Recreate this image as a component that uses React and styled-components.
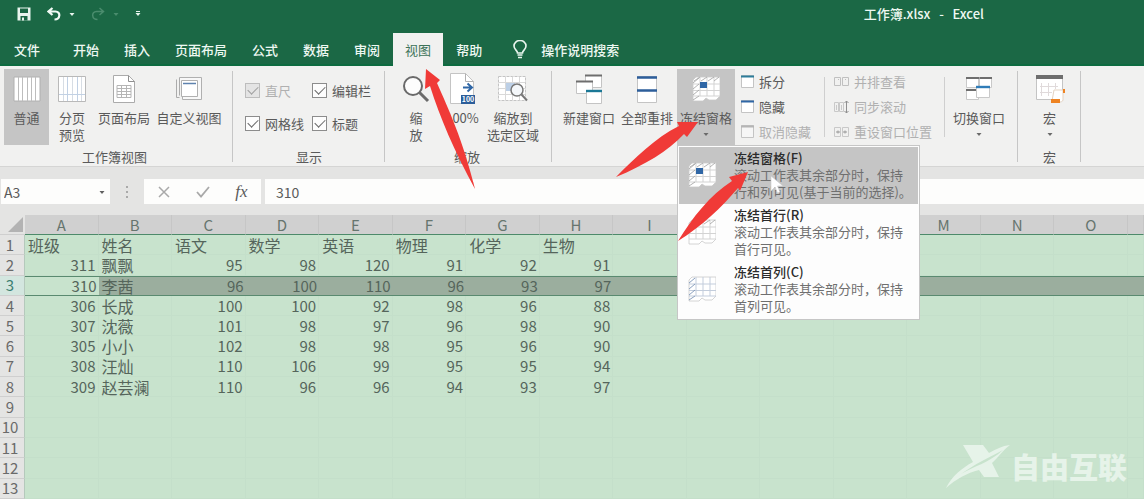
import styled, { createGlobalStyle } from 'styled-components'

const tabs = ['开始', '插入', '页面布局', '公式', '数据', '审阅', '视图', '帮助']

const columns = ['A', 'B', 'C', 'D', 'E', 'F', 'G', 'H', 'I', 'J', 'K', 'L', 'M', 'N', 'O']

const sheet = [
  ['班级', '姓名', '语文', '数学', '英语', '物理', '化学', '生物'],
  [311, '飘飘', 95, 98, 120, 91, 92, 91],
  [310, '李茜', 96, 100, 110, 96, 93, 97],
  [306, '长成', 100, 100, 92, 98, 96, 88],
  [307, '沈薇', 101, 98, 97, 96, 98, 90],
  [305, '小小', 102, 98, 98, 95, 96, 90],
  [308, '汪灿', 110, 106, 99, 95, 95, 94],
  [309, '赵芸澜', 110, 96, 96, 94, 93, 97],
  [],
  [],
  [],
  [],
  [],
]

const selectedRow = 3

const freezeOptions = [
  {
    title: '冻结窗格(F)',
    lines: ['滚动工作表其余部分时，保持', '行和列可见(基于当前的选择)。'],
    kind: 'panes',
    active: true,
  },
  {
    title: '冻结首行(R)',
    lines: ['滚动工作表其余部分时，保持', '首行可见。'],
    kind: 'row',
  },
  {
    title: '冻结首列(C)',
    lines: ['滚动工作表其余部分时，保持', '首列可见。'],
    kind: 'column',
  },
]

/* ---------- icons ---------- */

const SaveIcon = () => (
  <svg width="14" height="14" viewBox="0 0 14 14">
    <path d="M0.5 0.5h13v13h-13z" fill="#e9f5ee" />
    <path d="M3 1.5h8v4.5h-8zM3.5 9h7v4.5h-7z" fill="#1b6845" />
    <path d="M5 10.5h2v3h-2z" fill="#e9f5ee" />
  </svg>
)

const UndoIcon = ({ flip }) => (
  <svg width="14" height="14" viewBox="0 0 14 14">
    <g transform={flip ? 'translate(14 0) scale(-1 1)' : undefined}>
      <path
        d="M5.5 1L1.5 4.5L5.5 8M2 4.5H8.5C14 4.5 13.5 12.5 7.5 12.5"
        fill="none"
        stroke={flip ? '#4a8c6d' : '#f1faf5'}
        strokeWidth={flip ? 1.5 : 2.2}
      />
    </g>
  </svg>
)

const Caret = ({ color, bar }) => (
  <svg width="6" height="6" viewBox="0 0 6 6">
    {bar && <path d="M1 0.5h4" stroke={color} />}
    <path d="M0.5 2h5L3 5z" fill={color} />
  </svg>
)

const BulbIcon = () => (
  <svg width="14" height="19" viewBox="0 0 14 19">
    <path
      d="M4.5 13C4.5 10.5 1 9.5 1 6a6 5.5 0 0 1 12 0C13 9.5 9.5 10.5 9.5 13z"
      fill="none"
      stroke="#e9f5ee"
      strokeWidth="1.6"
    />
    <path d="M4.5 15h5M5 17.5h4" stroke="#e9f5ee" strokeWidth="1.6" />
  </svg>
)

const NormalIcon = () => (
  <svg width="28" height="26" viewBox="0 0 28 26">
    <path d="M1 1h26v24H1z" fill="#fff" stroke="#b0b0b0" />
    <path d="M5.5 1v24M9.5 1v24M14.5 1v24M18.5 1v24M22.5 1v24" stroke="#bdbdbd" />
  </svg>
)

const PageBreakIcon = () => (
  <svg width="28" height="26" viewBox="0 0 28 26">
    <path d="M.5 .5h27v25H.5z" fill="#fff" stroke="#b9b9b9" />
    <path d="M5.5 1v24M14.5 1v24M23.5 1v24" stroke="#d7dde4" />
    <path d="M9.5 1v24M19.5 1v24M1 18.5h26" stroke="#c2d1e4" />
  </svg>
)

const PageLayoutIcon = () => (
  <svg width="22" height="28" viewBox="0 0 22 28">
    <path d="M.5 .5h15l6 6v21H.5z" fill="#fff" stroke="#ababab" />
    <path d="M15.5 .5v6h6" fill="none" stroke="#8f8f8f" />
    <path
      d="M4 10.5h14v12H4zM4 13.5h14M4 16.5h14M4 19.5h14M8.5 10.5v12M13.5 10.5v12"
      fill="none"
      stroke="#b5b5b5"
    />
  </svg>
)

const CustomViewIcon = () => (
  <svg width="26" height="26" viewBox="0 0 26 26">
    <path d="M3.5 1.5h22v22h-19v-4" fill="#f8f8f8" stroke="#b0b0b0" />
    <path d="M.5 3.5v18h3M3.5 1.5v18" fill="none" stroke="#ababab" />
    <path d="M5.5 4.5h16v16h-16z" fill="#fff" stroke="#b0b0b0" />
    <path d="M7 7.5h13" stroke="#5e82ae" strokeWidth="1.5" />
  </svg>
)

const ZoomIcon = () => (
  <svg width="28" height="28" viewBox="0 0 28 28">
    <circle cx="11" cy="11" r="9" fill="#fdfdfd" stroke="#6a6a6a" strokeWidth="2" />
    <path d="M17.5 17.5L26 26" stroke="#6a6a6a" strokeWidth="3" />
  </svg>
)

const HundredIcon = () => (
  <svg width="28" height="32" viewBox="0 0 28 32">
    <path d="M2.5 .5h15l8 8v22h-23z" fill="#fff" stroke="#c4c4c4" />
    <path d="M17.5 .5v8h8" fill="none" stroke="#b0b0b0" />
    <path d="M15 14.5h8M19.5 10.5l4.5 4l-4.5 4" fill="none" stroke="#2f66a5" strokeWidth="2" />
    <path d="M13 22h14v9h-14z" fill="#2d5e9a" />
    <text x="20" y="29" fontSize="7" fontWeight="700" textAnchor="middle" fill="#fff">
      100
    </text>
  </svg>
)

const ZoomSelectionIcon = () => (
  <svg width="30" height="28" viewBox="0 0 30 28">
    <path d="M.5 1.5h27v24H.5z" fill="#fff" stroke="#c4c4c4" strokeDasharray="3 1" />
    <path d="M.5 7.5h27M.5 13.5h27M.5 19.5h27M7.5 1.5v24M14.5 1.5v24M21.5 1.5v24" stroke="#d9d9d9" />
    <path d="M8 8h9v8H8z" fill="#bccfe6" />
    <circle cx="19" cy="15" r="6" fill="#f4f7fa" stroke="#777" strokeWidth="1.5" />
    <path d="M23.5 19.5l5.5 6" stroke="#777" strokeWidth="2" />
  </svg>
)

const NewWindowIcon = () => (
  <svg width="28" height="30" viewBox="0 0 28 30">
    <path d="M10.5 1.5h16v12h-16z" fill="#fff" stroke="#c4c4c4" />
    <path d="M10 1.5h17" stroke="#6e6e6e" strokeWidth="2" />
    <path d="M1.5 7.5h16v12h-16z" fill="#fff" stroke="#c4c4c4" />
    <path d="M1 7.5h17" stroke="#6e6e6e" strokeWidth="2" />
    <path d="M11.5 16.5h15v13h-15z" fill="#fff" stroke="#c4c4c4" />
    <path d="M11 17h16" stroke="#1b7896" strokeWidth="2.4" />
  </svg>
)

const ArrangeIcon = () => (
  <svg width="22" height="28" viewBox="0 0 22 28">
    <path d="M1.5 1.5h19v26h-19z" fill="#fff" stroke="#c4c4c4" />
    <path d="M1 2.5h20M1 15.5h20" stroke="#2d5e9a" strokeWidth="2.6" />
  </svg>
)

const FreezeIcon = ({ kind }) => (
  <svg width="28" height="26" viewBox="0 0 28 26">
    <path d="M4 1h24v19l-4 4h-7l-3-2l-3 3H1V4z" fill="#fff" stroke="#c9c9c9" strokeWidth=".8" />
    <path
      d="M8 1v19M15 1v19M22 1v19M1 8h27M1 14.5h27M1 20h27"
      fill="none"
      stroke={kind === 'column' ? '#c3cddc' : '#d3d3d3'}
    />
    {kind !== 'row' && (
      <path
        d="M1 7l6-5M1 13l6-5M1 19l6-5M1 24l6-4"
        stroke={kind === 'column' ? '#7e96b8' : '#a9a9a9'}
        strokeWidth=".9"
      />
    )}
    {kind !== 'column' && <path d="M2 5l6-4M9 5l6-4M16 5l6-4M22 5l5-4" stroke="#a9a9a9" strokeWidth=".9" />}
    {kind === 'panes' && <path d="M8 6h7v6H8z" fill="#2f66a5" />}
  </svg>
)

const SwitchIcon = () => (
  <svg width="28" height="26" viewBox="0 0 28 26">
    <path d="M1.5 1.5h12v10h-12zM14.5 1.5h12v10h-12zM1.5 13.5h12v10h-12z" fill="#fff" stroke="#c9c9c9" />
    <path d="M1 2h13M14.5 2h12.5M1 14h11" stroke="#6e6e6e" strokeWidth="2" />
    <path d="M11.5 10.5h13v11h-13z" fill="#fff" stroke="#c9c9c9" />
    <path d="M11 11h14" stroke="#2f7cb8" strokeWidth="2.4" />
  </svg>
)

const MacroIcon = () => (
  <svg width="30" height="30" viewBox="0 0 30 30">
    <path d="M1.5 1.5h26v24h-26z" fill="#fff" stroke="#c4c4c4" />
    <path d="M1 1h27v4H1z" fill="#6e6e6e" />
    <path d="M6.5 9v13M13.5 9v13M20.5 9v6M5 12.5h18M5 18.5h12" stroke="#e0dadb" />
    <path d="M19 16h9v10c0 3-10 3-11 1z" fill="#fff" stroke="#e3d3c3" />
    <path d="M16 25h9v4h-9zM28 15h2v4h-2z" fill="#ee8322" />
  </svg>
)

const WindowIcon = ({ color, muted }) => (
  <svg width="13" height="13" viewBox="0 0 13 13">
    <path d="M.5 .5h12v12H.5z" fill={muted ? '#f6f6f6' : '#fff'} stroke="#c4c4c4" />
    <path d="M0 1.5h13" stroke={color} strokeWidth="2" />
  </svg>
)

const SideBySideIcon = () => (
  <svg width="15" height="12" viewBox="0 0 15 12">
    <path d="M.5 1.5h6v8h-6zM8.5 1.5h6v8h-6zM4 3.5h1M11 3.5h1" fill="none" stroke="#c0c0c0" />
  </svg>
)

const SyncIcon = () => (
  <svg width="15" height="14" viewBox="0 0 15 14">
    <path d="M.5 2.5h4v9h-4zM5.5 2.5h4v9h-4zM2.5 5v5M7.5 5v5" fill="none" stroke="#c9c9c9" />
    <path d="M12.5 1v12M10.5 3l2-2l2 2M10.5 11l2 2l2-2" fill="none" stroke="#8f8f8f" />
  </svg>
)

const ResetIcon = () => (
  <svg width="15" height="12" viewBox="0 0 15 12">
    <path d="M.5 1.5h6v9h-6zM8.5 1.5h6v9h-6z" fill="none" stroke="#c9c9c9" />
    <path d="M2 6h4M9 6h4M4 4.5v3M11 4.5v3" stroke="#999" />
  </svg>
)

const Pointer = () => (
  <svg width="14" height="20" viewBox="0 0 14 20">
    <path d="M1 1v15l4-4l2.5 6l2.5-1l-2.5-6H13z" fill="#fff" stroke="#c9c9c9" strokeWidth=".6" />
  </svg>
)

/* ---------- app ---------- */

const BigCommand = ({ icon, lines, width, active, caret }) => (
  <BigButton type="button" $width={width} $active={active}>
    <IconBox>{icon}</IconBox>
    {lines.map(line => (
      <span key={line}>{line}</span>
    ))}
    {caret && (
      <CaretBox>
        <Caret color="#6a6a6a" />
      </CaretBox>
    )}
  </BigButton>
)

const Check = ({ label, disabled }) => (
  <CheckLabel $disabled={disabled}>
    <input type="checkbox" defaultChecked disabled={disabled} />
    {label}
  </CheckLabel>
)

const App = () => {
  return (
    <Page>
      <GlobalStyle />
      <TitleBar>
        <QuickAccess>
          <QuickButton type="button" aria-label="保存">
            <SaveIcon />
          </QuickButton>
          <QuickButton type="button" aria-label="撤销">
            <UndoIcon />
            <Caret color="#e9f5ee" />
          </QuickButton>
          <QuickButton type="button" aria-label="恢复">
            <UndoIcon flip />
            <Caret color="#4a8c6d" />
          </QuickButton>
          <QuickButton type="button" aria-label="自定义快速访问工具栏">
            <Caret color="#e9f5ee" bar />
          </QuickButton>
        </QuickAccess>
        <h1>工作簿.xlsx&nbsp;&nbsp; -&nbsp;&nbsp; Excel</h1>
      </TitleBar>

      <TabBar>
        <FileTab type="button">文件</FileTab>
        {tabs.map(tab => (
          <Tab key={tab} type="button" $active={tab === '视图'}>
            {tab}
          </Tab>
        ))}
        <TellMe type="button">
          <BulbIcon />
          操作说明搜索
        </TellMe>
      </TabBar>

      <Ribbon>
        <Group $pad="0 8px 0 4px">
          <Commands>
            <BigCommand icon={<NormalIcon />} lines={['普通']} width={45} active />
            <BigCommand icon={<PageBreakIcon />} lines={['分页', '预览']} width={46} />
            <BigCommand icon={<PageLayoutIcon />} lines={['页面布局']} width={58} />
            <BigCommand icon={<CustomViewIcon />} lines={['自定义视图']} width={72} />
          </Commands>
          <GroupName>工作簿视图</GroupName>
        </Group>
        <Group $pad="0 12px">
          <Checks>
            <Check label="直尺" disabled />
            <Check label="编辑栏" />
            <Check label="网格线" />
            <Check label="标题" />
          </Checks>
          <GroupName>显示</GroupName>
        </Group>
        <Group $pad="0 11px 0 8px">
          <Commands>
            <BigCommand icon={<ZoomIcon />} lines={['缩', '放']} width={46} />
            <BigCommand icon={<HundredIcon />} lines={['100%']} width={46} />
            <BigCommand icon={<ZoomSelectionIcon />} lines={['缩放到', '选定区域']} width={56} />
          </Commands>
          <GroupName>缩放</GroupName>
        </Group>
        <Group $pad="0 8px">
          <Commands>
            <BigCommand icon={<NewWindowIcon />} lines={['新建窗口']} width={58} />
            <BigCommand icon={<ArrangeIcon />} lines={['全部重排']} width={58} />
            <MenuAnchor>
              <BigCommand icon={<FreezeIcon kind="panes" />} lines={['冻结窗格']} width={58} active caret />
              <Menu role="menu">
                {freezeOptions.map(({ title, lines, kind, active }) => (
                  <MenuItem key={title} type="button" role="menuitem" $active={active}>
                    <FreezeIcon kind={kind} />
                    <span>
                      <strong>{title}</strong>
                      {lines.map(line => (
                        <small key={line}>{line}</small>
                      ))}
                    </span>
                  </MenuItem>
                ))}
                <PointerBox>
                  <Pointer />
                </PointerBox>
              </Menu>
            </MenuAnchor>
            <Stack $width={89}>
              <SmallButton type="button">
                <WindowIcon color="#2d7d9a" />
                拆分
              </SmallButton>
              <SmallButton type="button">
                <WindowIcon color="#2f66a5" />
                隐藏
              </SmallButton>
              <SmallButton type="button" disabled>
                <WindowIcon color="#b5b5b5" muted />
                取消隐藏
              </SmallButton>
            </Stack>
            <Split />
            <Stack $width={116}>
              <SmallButton type="button" disabled>
                <SideBySideIcon />
                并排查看
              </SmallButton>
              <SmallButton type="button" disabled>
                <SyncIcon />
                同步滚动
              </SmallButton>
              <SmallButton type="button" disabled>
                <ResetIcon />
                重设窗口位置
              </SmallButton>
            </Stack>
            <Split />
            <BigCommand icon={<SwitchIcon />} lines={['切换窗口']} width={62} caret />
          </Commands>
        </Group>
        <Group $pad="0 8px">
          <Commands>
            <BigCommand icon={<MacroIcon />} lines={['宏']} width={47} caret />
          </Commands>
          <GroupName>宏</GroupName>
        </Group>
      </Ribbon>

      <FormulaBar>
        <NameBox>
          <input aria-label="名称框" defaultValue="A3" />
          <Caret color="#5f5f5f" />
        </NameBox>
        <Grip>
          <i />
          <i />
          <i />
        </Grip>
        <FormulaTools>
          <button type="button" aria-label="取消">
            <svg width="12" height="12" viewBox="0 0 12 12">
              <path d="M1 1l10 10M11 1L1 11" stroke="#a9a9a9" strokeWidth="1.5" />
            </svg>
          </button>
          <button type="button" aria-label="输入">
            <svg width="14" height="12" viewBox="0 0 14 12">
              <path d="M1 6l4 4.5L13 1" fill="none" stroke="#a9a9a9" strokeWidth="1.8" />
            </svg>
          </button>
          <button type="button">
            <em>fx</em>
          </button>
        </FormulaTools>
        <FormulaInput aria-label="编辑栏" defaultValue="310" />
      </FormulaBar>

      <SheetArea>
        <Sheet>
          <colgroup>
            <col className="row-head" />
            {columns.map(column => (
              <col key={column} />
            ))}
            <col className="rest" />
          </colgroup>
          <thead>
            <tr>
              <Corner>
                <svg width="16" height="16" viewBox="0 0 16 16">
                  <path d="M15 0v15H0z" fill="#b3b3b3" />
                </svg>
              </Corner>
              {columns.map(column => (
                <ColumnHead key={column}>{column}</ColumnHead>
              ))}
              <ColumnHead />
            </tr>
          </thead>
          <tbody>
            {sheet.map((row, index) => {
              const number = index + 1
              const selected = number === selectedRow
              return (
                <tr key={number}>
                  <RowHead $selected={selected}>{number}</RowHead>
                  {[...columns, 'P'].map((column, i) => (
                    <Cell
                      key={column}
                      $number={typeof row[i] === 'number'}
                      $selected={selected}
                      $current={selected && i === 0}>
                      {row[i]}
                    </Cell>
                  ))}
                </tr>
              )
            })}
          </tbody>
        </Sheet>
      </SheetArea>

      <Arrows width="760" height="250" viewBox="0 0 760 250">
        <path d="M426 69L440 80L437 83C448 108 463 140 475 189C454 150 440 118 430 86L425 89z" />
        <path d="M698 122L687 137L684 134C668 151 645 165 616 177C635 158 655 138 679 126L677 122z" />
        <path d="M748 172L740 191L738 188C722 207 702 226 678 241C692 218 710 195 732 181L729 177z" />
      </Arrows>

      <Watermark>
        <svg width="66" height="46" viewBox="0 0 66 46">
          <path d="M18 2h20l6 8C51 6 57 3 65 2C56 9 53 15 47 20L54 34H39L34 27C22 30 11 36 1 45C7 33 17 25 28 19z" />
          <path d="M16 31C30 21 43 15 58 7C44 20 29 23 16 31z" fill="#c8e3cd" />
        </svg>
        自由互联
      </Watermark>
    </Page>
  )
}

export default App

const GlobalStyle = createGlobalStyle`
  * {
    box-sizing: border-box;
  }
  body {
    margin: 0;
    overflow: hidden;
    font-family: 'Noto Sans CJK SC', sans-serif;
    font-size: 13px;
    color: #5a5a5a;
  }
  button,
  input {
    font: inherit;
    color: inherit;
    border: 0;
    padding: 0;
    background: none;
  }
  svg {
    display: block;
    flex-shrink: 0;
  }
`

const Page = styled.div`
  position: relative;
  display: flex;
  flex-direction: column;
  min-height: 100vh;
  background: #e4e4e3;
`

const TitleBar = styled.header`
  display: flex;
  align-items: center;
  justify-content: space-between;
  height: 33px;
  padding: 0 160px 6px 17px;
  background: #1b6845;
  color: #eef8f2;
  h1 {
    margin: 0;
    font-size: 13px;
    font-weight: 500;
    white-space: nowrap;
  }
`

const QuickAccess = styled.div`
  display: flex;
  gap: 16px;
`

const QuickButton = styled.button`
  display: flex;
  align-items: center;
  gap: 8px;
`

const TabBar = styled.nav`
  display: flex;
  gap: 1px;
  height: 33px;
  background: #1b6845;
  border-bottom: 2px solid #0d6b40;
`

const Tab = styled.button`
  height: 33px;
  padding: 0 12px;
  font-weight: ${props => (props.$active ? 400 : 500)};
  white-space: nowrap;
  color: ${props => (props.$active ? '#3d7359' : '#eef8f2')};
  background: ${props => (props.$active ? '#f1f1f0' : 'transparent')};
`

const FileTab = styled(Tab)`
  padding: 0 20px 0 14px;
`

const TellMe = styled(Tab)`
  display: flex;
  align-items: center;
  gap: 14px;
  padding: 0 18px;
`

const Ribbon = styled.section`
  display: flex;
  height: 101px;
  background: #f1f1f0;
  border-bottom: 1px solid #d5d5d4;
`

const Group = styled.div`
  position: relative;
  display: flex;
  flex-direction: column;
  flex-shrink: 0;
  padding: ${props => props.$pad};
  /* the divider is shorter than the ribbon */
  &::after {
    content: '';
    position: absolute;
    top: 5px;
    right: 0;
    bottom: 4px;
    width: 1px;
    background: #c6c6c6;
  }
`

const Commands = styled.div`
  display: flex;
  height: 79px;
  padding-top: 3px;
`

const GroupName = styled.div`
  padding-top: 3px;
  line-height: 18px;
  text-align: center;
`

const BigButton = styled.button`
  display: flex;
  flex-direction: column;
  align-items: center;
  width: ${props => props.$width}px;
  height: 76px;
  line-height: 17px;
  white-space: nowrap;
  background: ${props => (props.$active ? '#c5c5c5' : 'transparent')};
`

const IconBox = styled.span`
  display: flex;
  align-items: center;
  justify-content: center;
  height: 40px;
`

const CaretBox = styled.span`
  padding-top: 5px;
`

const Checks = styled.div`
  display: grid;
  grid-template-columns: 67px 61px;
  grid-template-rows: 33px 33px;
  align-items: center;
  height: 79px;
  padding-top: 8px;
`

const CheckLabel = styled.label`
  display: flex;
  align-items: center;
  gap: 5px;
  white-space: nowrap;
  color: ${props => (props.$disabled ? '#b0b0b0' : 'inherit')};
  input {
    appearance: none;
    width: 15px;
    height: 15px;
    margin: 0;
    border: 1px solid ${props => (props.$disabled ? '#bdbdbd' : '#8c8c8c')};
    background: ${props => (props.$disabled ? '#e4e4e4' : '#fdfdfd')};
    &::before {
      content: '';
      display: block;
      width: 9px;
      height: 5px;
      margin: 2px 0 0 2px;
      border: solid ${props => (props.$disabled ? '#a0a0a0' : '#6a6a6a')};
      border-width: 0 0 1px 1px;
      transform: rotate(-45deg);
    }
  }
`

const Stack = styled.div`
  display: flex;
  flex-direction: column;
  width: ${props => props.$width}px;
  padding-left: 6px;
`

const SmallButton = styled.button`
  display: flex;
  align-items: center;
  gap: 5px;
  height: 25px;
  line-height: 25px;
  white-space: nowrap;
  &:disabled {
    color: #b0b0b0;
  }
`

const Split = styled.div`
  width: 1px;
  margin: 8px 3px 8px 0;
  background: #cfcfcf;
`

const MenuAnchor = styled.div`
  position: relative;
  margin-left: 1px;
`

const Menu = styled.div`
  position: absolute;
  z-index: 2;
  top: 76px;
  left: 0;
  width: 243px;
  padding: 1px;
  background: #fdfdfd;
  border: 1px solid #c6c6c6;
`

const MenuItem = styled.button`
  display: flex;
  align-items: center;
  gap: 18px;
  width: 100%;
  height: 57px;
  padding: 0 9px 2px;
  text-align: left;
  line-height: 17px;
  white-space: nowrap;
  background: ${props => (props.$active ? '#c5c5c5' : 'transparent')};
  strong {
    display: block;
    font-weight: 500;
    color: #2b2b2b;
  }
  small {
    display: block;
    font-size: 13px;
    color: #6f6f6f;
  }
`

const PointerBox = styled.div`
  position: absolute;
  top: 29px;
  left: 92px;
`

const FormulaBar = styled.div`
  display: flex;
  height: 48px;
  padding: 12px 0 11px 1px;
  font-size: 14px;
`

const NameBox = styled.div`
  display: flex;
  align-items: center;
  width: 109px;
  padding: 0 5px 0 3px;
  background: #fdfdfc;
  input {
    flex: 1;
    min-width: 0;
  }
`

const Grip = styled.div`
  display: flex;
  flex-direction: column;
  align-items: center;
  justify-content: center;
  gap: 3px;
  width: 34px;
  i {
    width: 2px;
    height: 2px;
    background: #a9a9a9;
  }
`

const FormulaTools = styled.div`
  display: flex;
  width: 117px;
  background: #fdfdfc;
  button {
    display: flex;
    flex: 1;
    align-items: center;
    justify-content: center;
  }
  em {
    font-family: 'Liberation Serif', serif;
    font-size: 17px;
  }
`

const FormulaInput = styled.input`
  flex: 1;
  min-width: 0;
  margin-left: 4px;
  padding: 0 11px;
  background: #fdfdfc;
`

const SheetArea = styled.main`
  display: grid;
  flex: 1;
`

const Sheet = styled.table`
  width: 100%;
  height: 100%;
  table-layout: fixed;
  border-collapse: separate;
  border-spacing: 0;
  line-height: 18px;
  font-size: 15px;
  .row-head {
    width: 25px;
  }
  .rest {
    width: 16px;
  }
  th,
  td {
    height: 20px;
    padding: 0;
    font-weight: 400;
    white-space: nowrap;
  }
`

const Corner = styled.th`
  border-bottom: 1px solid #cfcfcf;
  svg {
    margin-left: 8px;
  }
`

const ColumnHead = styled.th`
  color: #66756e;
  background: #d0d0d0;
  border-right: 1px solid #c6c6c6;
  border-bottom: 1px solid #4d8a6a;
`

const RowHead = styled.th`
  color: ${props => (props.$selected ? '#3d7f72' : '#6a6a6a')};
  background: ${props => (props.$selected ? '#d3e6df' : '#e4e4e3')};
  border-right: 1px solid #b5c9bc;
  border-bottom: 1px solid #cfcfcf;
  && {
    padding-right: 4px;
  }
`

const Cell = styled.td`
  font-size: ${props => (props.$number ? 15 : 16)}px;
  text-align: ${props => (props.$number ? 'right' : 'left')};
  color: #55655b;
  background: ${props => (props.$selected && !props.$current ? '#9bae9e' : '#c8e3cd')};
  border: solid ${props => (props.$selected ? '#5a8a70' : '#c4dfca')};
  border-width: ${props => (props.$selected ? '1px 0 1px 0' : '0 1px 1px 0')};
  && {
    padding: 0 2px 0 3px;
  }
`

const Arrows = styled.svg`
  position: absolute;
  z-index: 3;
  top: 0;
  left: 0;
  fill: #f03a37;
  pointer-events: none;
`

const Watermark = styled.div`
  position: absolute;
  right: 17px;
  bottom: 10px;
  display: flex;
  align-items: center;
  font-size: 29px;
  font-weight: 900;
  line-height: 44px;
  color: #e6f3e9;
  svg {
    fill: #e6f3e9;
  }
`
